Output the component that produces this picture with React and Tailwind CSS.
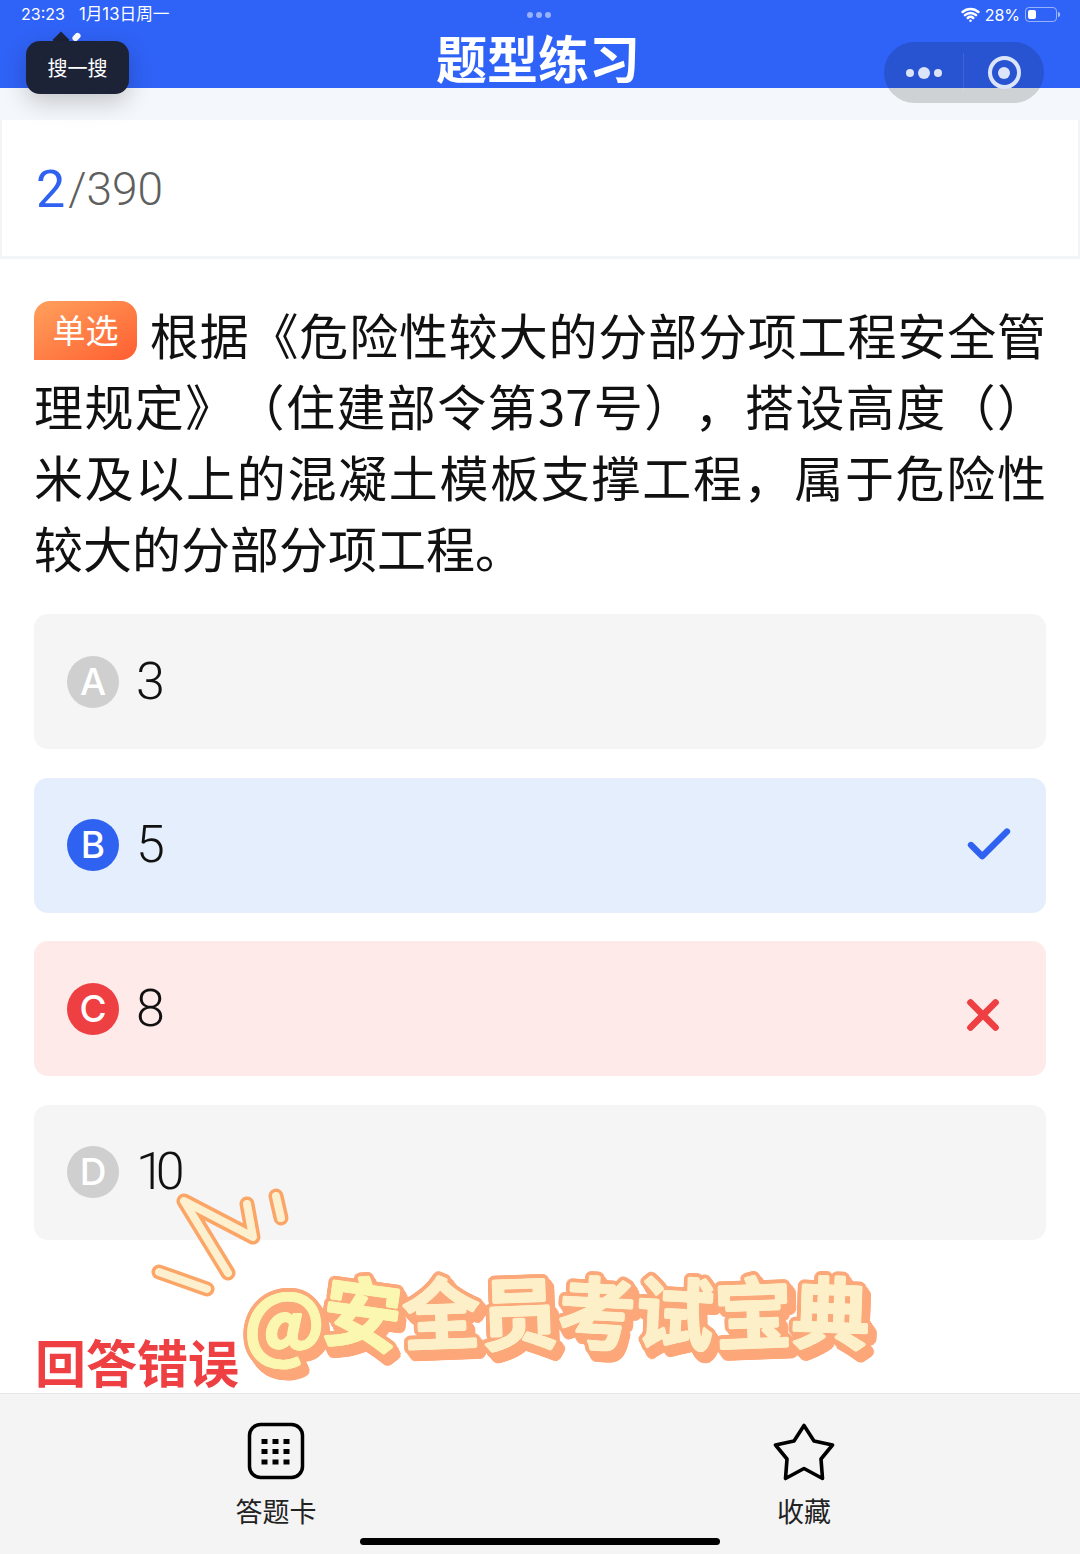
import React from "react";
import { Check, X, Wifi } from "lucide-react";

const options = [
  { key: "A", value: "3", row: "bg-[#f5f5f5]", dot: "bg-[#cfcfcf]" },
  { key: "B", value: "5", row: "bg-[#e5eefd]", dot: "bg-[#2f62f0]", mark: "check" },
  { key: "C", value: "8", row: "bg-[#ffeaea]", dot: "bg-[#ee3f42]", mark: "x" },
  { key: "D", value: "10", row: "bg-[#f5f5f5]", dot: "bg-[#cfcfcf]" },
];

const stickerChars = [
  { c: "安", tilt: "rotate-[8deg]", fill: "text-[#fbf6b0]" },
  { c: "全", tilt: "-rotate-2", fill: "text-[#fdefc8]" },
  { c: "员", tilt: "-rotate-2", fill: "text-[#fdefc8]" },
  { c: "考", tilt: "rotate-3", fill: "text-[#fdefc8]" },
  { c: "试", tilt: "rotate-3", fill: "text-[#fdefc8]" },
  { c: "宝", tilt: "-rotate-2", fill: "text-[#fdefc8]" },
  { c: "典", tilt: "rotate-2", fill: "text-[#fdefc8]" },
];

// one shadow per step round a circle, so the glyph gets a thick outline
function ring(radius, color, dx = 0, dy = 0, steps = 20) {
  const out = [];
  for (let i = 0; i < steps; i++) {
    const a = (i / steps) * Math.PI * 2;
    out.push(`${(dx + Math.cos(a) * radius).toFixed(1)}px ${(dy + Math.sin(a) * radius).toFixed(1)}px 0 ${color}`);
  }
  return out;
}

const stickerShadow = [
  ...ring(1.2, "currentColor", 0, 0, 8),
  ...ring(5, "#fba87a"),
  ...ring(5, "#fda77a", 3, 4),
  ...ring(5, "#fda77a", 5, 7),
].join(", ");

function Battery() {
  return (
    <div className="flex items-center">
      <div className="flex h-[15px] w-[32px] items-center rounded-[4px] border border-white/50 p-[2px]">
        <div className="h-full w-[8px] rounded-[2px] bg-white" />
      </div>
      <div className="ml-px h-[5px] w-[2px] rounded-r bg-white/60" />
    </div>
  );
}

function Squiggle() {
  const lines = ["M228 1273 L184 1201 L253 1237 L247 1204", "M276 1196 L281 1218", "M159 1272 L207 1289"];
  return (
    <svg className="absolute left-0 top-0" width="1080" height="1554" fill="none" strokeLinecap="round" strokeLinejoin="round">
      {lines.map((d) => (
        <path key={d} d={d} stroke="#fba566" strokeWidth="15" />
      ))}
      {lines.map((d) => (
        <path key={d} d={d} stroke="#fdf0cf" strokeWidth="8" />
      ))}
    </svg>
  );
}

function GridIcon() {
  const dots = [];
  for (const y of [17, 27, 37.5]) for (const x of [14.5, 25.5, 36.5]) dots.push([x, y]);
  return (
    <svg width="58" height="58" viewBox="0 0 58 58" fill="none">
      <rect x="2.5" y="2.5" width="53" height="53" rx="11" stroke="#000" strokeWidth="3.5" />
      {dots.map(([x, y]) => (
        <rect key={`${x}-${y}`} x={x} y={y} width="6" height="5" fill="#000" />
      ))}
    </svg>
  );
}

function StarIcon() {
  return (
    <svg width="62" height="60" viewBox="0 0 62 60" fill="none">
      <path d="M31 3.5 L41 19 L59.5 23 L48 37 L49.5 56.5 L31 46.5 L12.5 56.5 L14 37 L2.5 23 L21 19 Z" stroke="#000" strokeWidth="3.6" strokeLinejoin="round" />
    </svg>
  );
}

export default function App() {
  return (
    <div className="relative flex h-[1554px] w-[1080px] flex-col overflow-hidden bg-white [font-family:'Noto_Sans_CJK_SC',sans-serif] text-[#1a1a1a]">
      {/* status bar + title */}
      <header className="h-[88px] shrink-0 bg-[#2f62f6] text-white">
        <div className="flex h-[29px] items-center justify-between pl-[21px] pr-[20px] text-[16px] [font-family:'Inter','Noto_Sans_CJK_SC',sans-serif]">
          <div className="flex items-center gap-[14px]">
            <span>23:23</span>
            <span className="text-[16.7px]">1月13日周一</span>
          </div>
          <div className="flex items-center gap-[5px]">
            <Wifi className="h-[19px] w-[19px]" strokeWidth={3.2} />
            <span>28%</span>
            <Battery />
          </div>
        </div>
        <h1 className="-mt-[2px] pr-[4px] text-center text-[51px] font-bold leading-[60px]">题型练习</h1>
      </header>

      <div className="h-[32px] shrink-0 bg-[#f4f7fb]" />

      <div className="flex h-[139px] shrink-0 items-center border-x-[2px] border-b-[3px] border-[#f3f4f6] pl-[34px] pt-[3px] text-[46px] font-light text-[#5f5f5f] [font-family:'Roboto',sans-serif]">
        <span className="text-[52px] font-normal text-[#2f62f0]">2</span>
        <span className="ml-[3px]">/390</span>
      </div>

      {/* question */}
      <p className="mt-[39px] px-[34px] text-justify text-[49px] leading-[71px] text-[#111] [text-spacing-trim:space-all]">
        <span className="mr-[12px] mt-[3px] inline-flex h-[59px] w-[103px] items-center justify-center rounded-tl-[16px] rounded-tr-[16px] rounded-br-[16px] bg-gradient-to-br from-[#ffa05c] to-[#ff5c30] pb-[3px] align-top text-[33px] leading-none text-white">单选</span>
        根据《危险性较大的分部分项工程安全管理规定》（住建部令第37号），搭设高度（）米及以上的混凝土模板支撑工程，属于危险性较大的分部分项工程。
      </p>

      {/* options */}
      <div className="mt-[32px] flex flex-col gap-[28.5px] px-[34px]">
        {options.map((o) => (
          <div key={o.key} className={`flex h-[135px] items-center rounded-[14px] pl-[33px] pr-[30px] ${o.row}`}>
            <span className={`flex h-[52px] w-[52px] items-center justify-center rounded-full text-[37px] font-medium text-white [font-family:'Inter',sans-serif] ${o.dot}`}>{o.key}</span>
            <span className="ml-[17px] flex-1 text-[52px] font-light tracking-[-9px] text-[#111] [font-family:'Roboto',sans-serif]">{o.value}</span>
            {o.mark === "check" && <Check className="h-[54px] w-[54px] text-[#2f62f0]" strokeWidth={2.8} />}
            {o.mark === "x" && <X className="mr-[8px] mt-[12px] h-[50px] w-[50px] text-[#ee3f42]" strokeWidth={3.2} />}
          </div>
        ))}
      </div>

      <div className="mt-auto pb-[2px] pl-[35px] text-[51px] font-bold leading-[60px] text-[#ee3f42]">回答错误</div>

      {/* bottom bar */}
      <footer className="grid h-[161px] shrink-0 grid-cols-2 border-t border-[#e6e6e6] bg-[#f4f4f4] px-[12px] pt-[28px]">
        <div className="flex flex-col items-center">
          <GridIcon />
          <span className="mt-[11px] text-[27px] leading-[40px] text-[#222]">答题卡</span>
        </div>
        <div className="flex flex-col items-center">
          <StarIcon />
          <span className="mt-[9px] text-[27px] leading-[40px] text-[#222]">收藏</span>
        </div>
      </footer>

      {/* window chrome lying over the page */}
      <div className="absolute left-[527px] top-[12px] flex gap-[3px]">
        <span className="h-[6px] w-[6px] rounded-full bg-white/50" />
        <span className="h-[6px] w-[6px] rounded-full bg-white/50" />
        <span className="h-[6px] w-[6px] rounded-full bg-white/50" />
      </div>

      <div className="absolute left-[884px] top-[42px] flex h-[61px] w-[160px] items-center rounded-full bg-black/15">
        <div className="flex h-[40px] w-[80px] items-center justify-center gap-[4px] border-r border-white/10">
          <span className="h-[8px] w-[8px] rounded-full bg-[#dbe4f8]" />
          <span className="h-[12px] w-[12px] rounded-full bg-[#dbe4f8]" />
          <span className="h-[8px] w-[8px] rounded-full bg-[#dbe4f8]" />
        </div>
        <div className="flex flex-1 items-center justify-center">
          <span className="flex h-[33px] w-[33px] items-center justify-center rounded-full border-[4px] border-[#dbe4f8]">
            <span className="h-[12px] w-[12px] rounded-full bg-[#dbe4f8]" />
          </span>
        </div>
      </div>

      <div className="absolute left-[72px] top-[34px] h-[6px] w-[9px] -rotate-45 rounded-full bg-white" />
      <div className="absolute left-[55px] top-[34px] h-[12px] w-[12px] rotate-45 bg-[#1d2336]" />
      <div className="absolute left-[26px] top-[41px] flex h-[53px] w-[103px] items-center justify-center rounded-[14px] bg-[#1d2336] text-[20px] text-white shadow-[0_8px_24px_rgba(0,0,0,0.2)]">搜一搜</div>

      {/* sticker */}
      <Squiggle />
      <div className="absolute left-[244px] top-[1257px] flex h-[104px] items-center font-bold" style={{ textShadow: stickerShadow }}>
        <span className="mr-[2px] mt-[18px] w-[78px] text-center text-[80px] leading-none text-[#fbf6b0]">@</span>
        {stickerChars.map(({ c, tilt, fill }) => (
          <span key={c} className={`w-[78px] text-center text-[78px] leading-none ${tilt} ${fill}`}>{c}</span>
        ))}
      </div>

      <div className="absolute bottom-[9px] left-[360px] h-[7px] w-[360px] rounded-full bg-black" />
    </div>
  );
}
